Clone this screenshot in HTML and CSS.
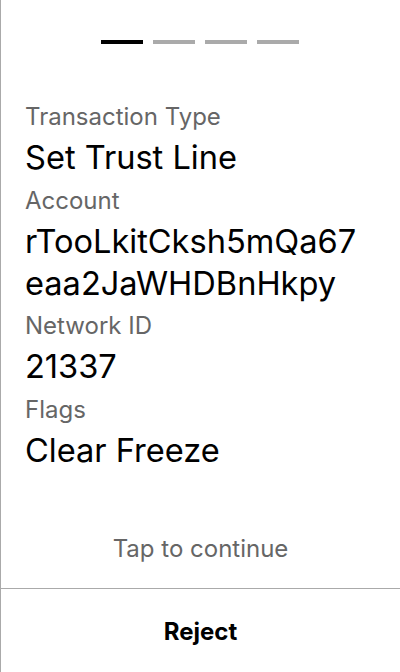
FILE: index.html
```html
<!DOCTYPE html>
<html>
<head>
<meta charset="utf-8">
<link rel="stylesheet" href="styles.css">
</head>
<body>
<div class="screen">
  <div class="main">
    <div class="steps">
      <span class="step active"></span>
      <span class="step"></span>
      <span class="step"></span>
      <span class="step"></span>
    </div>
    <div class="fields">
      <div class="field">
        <div class="label">Transaction Type</div>
        <div class="value">Set Trust Line</div>
      </div>
      <div class="field">
        <div class="label">Account</div>
        <div class="value">rTooLkitCksh5mQa67<br>eaa2JaWHDBnHkpy</div>
      </div>
      <div class="field">
        <div class="label">Network ID</div>
        <div class="value">21337</div>
      </div>
      <div class="field">
        <div class="label">Flags</div>
        <div class="value">Clear Freeze</div>
      </div>
    </div>
    <div class="tap">Tap to continue</div>
  </div>
  <div class="reject">Reject</div>
</div>
</body>
</html>
```
FILE: styles.css
```css
html, body {
  margin: 0;
  padding: 0;
  background: #fff;
}
body {
  font-family: Inter, "Noto Sans", sans-serif;
  color: #000;
}
.screen {
  width: 400px;
  height: 672px;
  box-sizing: border-box;
  border-left: 1px solid #aaa;
  display: flex;
  flex-direction: column;
}
.main {
  flex: 1;
  display: flex;
  flex-direction: column;
  border-bottom: 1px solid #aaa;
}
.steps {
  display: flex;
  justify-content: center;
  gap: 10px;
  padding-top: 40px;
  padding-right: 1px;
}
.step {
  width: 42px;
  height: 4px;
  background: #aaa;
}
.step.active {
  background: #000;
}
.fields {
  padding: 52px 0 0 24px;
  display: flex;
  flex-direction: column;
  gap: 1.5px;
}
.label {
  font-size: 24px;
  line-height: 42px;
  color: #666;
}
.value {
  font-size: 32.6px;
  line-height: 42px;
  margin-top: -2px;
}
.tap {
  margin-top: auto;
  padding-bottom: 25px;
  text-align: center;
  font-size: 24px;
  color: #666;
}
.reject {
  height: 83px;
  box-sizing: border-box;
  padding-top: 2px;
  display: flex;
  align-items: center;
  justify-content: center;
  font-size: 24px;
  font-weight: 700;
}
```
